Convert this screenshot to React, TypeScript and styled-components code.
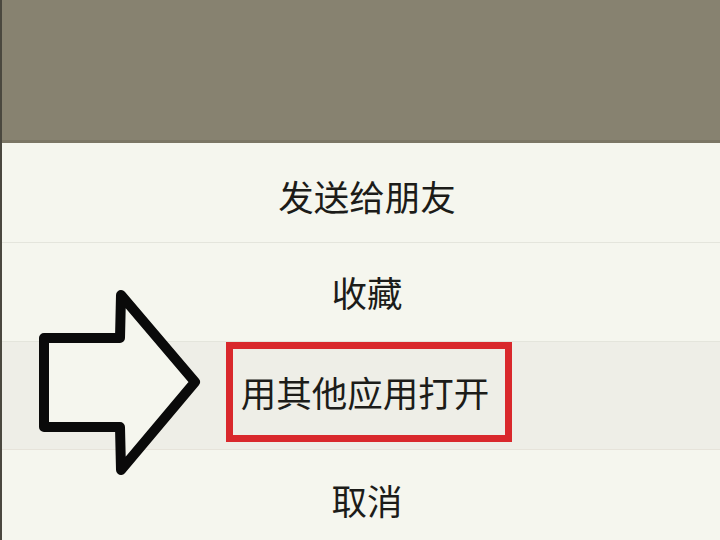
import styled, { createGlobalStyle } from "styled-components";

const GlobalStyle = createGlobalStyle`
  html, body {
    margin: 0;
    padding: 0;
    background: #f5f6ee;
  }
  body {
    font-family: "Noto Sans CJK SC", "Noto Sans", sans-serif;
  }
`;

const Screen = styled.div`
  position: relative;
  width: 720px;
  height: 540px;
  overflow: hidden;
  display: flex;
  flex-direction: column;
  background: #f5f6ee;
  border-left: 2px solid #4a483f;
  box-sizing: border-box;
`;

const Backdrop = styled.div`
  height: 140px;
  flex-shrink: 0;
  background: #878270;
  border-bottom: 3px solid #7b7665;
`;

const Sheet = styled.ul`
  list-style: none;
  margin: 0;
  padding: 0;
  display: flex;
  flex-direction: column;
`;

const Item = styled.li<{ $height: number; $offset?: number; $active?: boolean; $top?: boolean }>`
  height: ${(p) => p.$height}px;
  flex-shrink: 0;
  box-sizing: border-box;
  display: flex;
  justify-content: center;
  align-items: ${(p) => (p.$top ? "flex-start" : "center")};
  padding-top: ${(p) => p.$offset ?? 0}px;
  padding-left: 12px;
  background: ${(p) => (p.$active ? "#eeeee7" : "transparent")};
  border-bottom: 1px solid ${(p) => (p.$active ? "#e6e3da" : "#e4e5dc")};
  font-size: 35.5px;
  color: #1c1c19;
`;

const Label = styled.span<{ $marked?: boolean }>`
  display: flex;
  align-items: center;
  justify-content: center;
  line-height: 1;
  ${(p) =>
    p.$marked &&
    `
    box-sizing: border-box;
    height: 100px;
    padding: 0 16px 0 8px;
    margin-left: 4px;
    border: 7px solid #d9282c;
  `}
`;

const Pointer = styled.svg`
  position: absolute;
  left: 0;
  top: 278px;
  width: 210px;
  height: 210px;
`;

export default function App() {
  return (
    <>
      <GlobalStyle />
      <Screen>
        <Backdrop />
        <Sheet>
          <Item $height={100} $offset={6}>
            <Label>发送给朋友</Label>
          </Item>
          <Item $height={99}>
            <Label>收藏</Label>
          </Item>
          <Item $height={108} $active $top>
            <Label $marked>用其他应用打开</Label>
          </Item>
          <Item $height={100}>
            <Label>取消</Label>
          </Item>
        </Sheet>
        <Pointer viewBox="0 0 210 210">
          <polygon
            points="42,60 118,60 119,17 193,104 119,192 118,149 42,149"
            fill="#f5f6ee"
            stroke="#0a0a0a"
            strokeWidth={10}
            strokeLinejoin="round"
          />
        </Pointer>
      </Screen>
    </>
  );
}
